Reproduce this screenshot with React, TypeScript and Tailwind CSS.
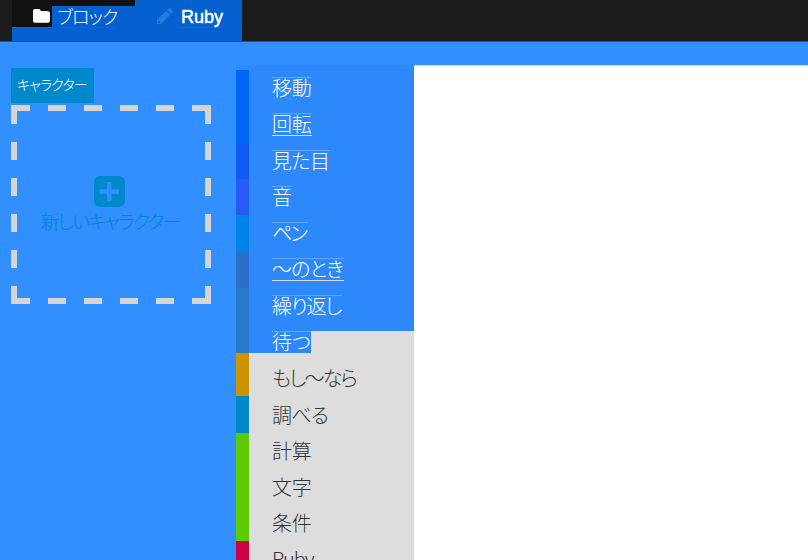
import React from 'react';

const categories = [
  { color: 'bg-[#0066f8]', height: 'h-[73px]' },
  { color: 'bg-[#105cf3]', height: 'h-[36px]' },
  { color: 'bg-[#285af6]', height: 'h-[36px]' },
  { color: 'bg-[#0083e8]', height: 'h-[36px]' },
  { color: 'bg-[#2a70ca]', height: 'h-[37px]' },
  { color: 'bg-[#2a78c8]', height: 'h-[65px]' },
  { color: 'bg-[#cc9500]', height: 'h-[43px]' },
  { color: 'bg-[#0088cc]', height: 'h-[37px]' },
  { color: 'bg-[#5ccb00]', height: 'h-[108px]' },
  { color: 'bg-[#cc0044]', height: 'h-[19px]' },
];

type Item = { label: string; top: string; width: string; spacing: string; selected?: boolean; underline?: boolean };

const items: Item[] = [
  { label: '移動', top: 'mt-[12px]', width: 'w-[40px]', spacing: 'tracking-[-0.3px]', selected: true },
  { label: '回転', top: 'mt-[14px]', width: 'w-[40px]', spacing: 'tracking-[-0.3px]', selected: true, underline: true },
  { label: '見た目', top: 'mt-[15px]', width: 'w-[58px]', spacing: 'tracking-[-0.6px]', selected: true },
  { label: '音', top: 'mt-[14px]', width: 'w-[20px]', spacing: 'tracking-normal', selected: true },
  { label: 'ペン', top: 'mt-[14px]', width: 'w-[36px]', spacing: 'tracking-[-2px]', selected: true },
  { label: '〜のとき', top: 'mt-[14px]', width: 'w-[72px]', spacing: 'tracking-[-0.9px]', selected: true, underline: true },
  { label: '繰り返し', top: 'mt-[15px]', width: 'w-[70px]', spacing: 'tracking-[-1.1px]', selected: true },
  { label: '待つ', top: 'mt-[14px]', width: 'w-[39px]', spacing: 'tracking-normal', selected: true },
  { label: 'もし〜なら', top: 'mt-[14px]', width: 'w-[86px]', spacing: 'tracking-[-1.7px]' },
  { label: '調べる', top: 'mt-[15px]', width: 'w-[57px]', spacing: 'tracking-[-0.7px]' },
  { label: '計算', top: 'mt-[14px]', width: 'w-[40px]', spacing: 'tracking-[-0.3px]' },
  { label: '文字', top: 'mt-[14px]', width: 'w-[40px]', spacing: 'tracking-[-0.3px]' },
  { label: '条件', top: 'mt-[14px]', width: 'w-[40px]', spacing: 'tracking-[-0.3px]' },
  { label: 'Ruby', top: 'mt-[14px]', width: 'w-[44px]', spacing: 'tracking-[-1.1px]' },
];

function NavBar() {
  return (
    <header className="flex h-[42px] border-b border-[#0858bd] bg-[#1c1c1c] pl-3">
      <div className="flex h-[41px] w-[123px] flex-col bg-[#0560d0]">
        <div className="flex h-[27px] bg-[#111111]">
          <div className="h-full w-10 pl-[20px] pt-[9px]">
            <svg width="18" height="14" viewBox="0 0 18 14" fill="white">
              <path d="M1 2.2C1 .8 1.8 0 3 0h3.6c1.3 0 2 .8 2 2h6.2C16.800 2 18 2.800 18 4v7.700c0 1.300-.9 2-2.100 2H3c-1.200 0-2-.8-2-2z" />
            </svg>
          </div>
          <div className="mt-[6px] h-[21px] flex-1 whitespace-nowrap bg-[#0560d0] pl-[5px] text-[18px] leading-[24px] tracking-[-0.8px] text-white">ブロック</div>
        </div>
        <div className="h-px w-[104px] bg-[#0866dd]" />
      </div>
      <div className="flex h-[41px] w-[107px] bg-[#0560d0] pl-[21px]">
        <svg className="mt-[8px]" width="17" height="17" viewBox="0 0 17 17" fill="#2478e4">
          <path d="M1 11.800 9.900 2.900l4.200 4.200L5.200 16H1zM10.800 2 12.300.6c.7-.7 1.500-.7 2.200 0l1.900 1.900c.7.700.7 1.500 0 2.200L15 6.200z" />
          <path d="m2.500 12.500 1.900 1.900-.8.700H2v-1.700z" fill="#0560d0" />
        </svg>
        <span className="ml-[8px] mt-[5px] h-[23px] border-b border-[#1169df] text-[18px] font-normal leading-[24px] text-white [-webkit-text-stroke:0.5px_white]">Ruby</span>
      </div>
    </header>
  );
}

function NewCharacter() {
  return (
    <button className="relative mt-[2px] block h-[199px] w-[200px] text-[#0088cc]">
      <svg className="absolute inset-0" width="200" height="199" fill="none" stroke="#d5d5d5" strokeWidth="6">
        <path d="M0 3H19M37 3h18M73 3h18M109 3h18M145 3h18M181 3h19M0 196H19M37 196h18M73 196h18M109 196h18M145 196h18M181 196h19" />
        <path d="M3 0V19M3 37v18M3 73v18M3 109v18M3 145v18M3 181v18M197 0V19M197 37v18M197 73v18M197 109v18M197 145v18M197 181v18" />
      </svg>
      <span className="flex flex-col items-center pt-[5px]">
        <svg className="-mt-px mr-[4px]" width="31" height="31" viewBox="0 0 31 31">
          <rect width="31" height="31" rx="6" fill="#0088cc" />
          <path d="M13 6h4.500v7.200H25v4.600h-7.500V25H13v-7.200H5.500v-4.600H13z" fill="#328fff" />
        </svg>
        <span className="mr-[2px] whitespace-nowrap text-[19px] leading-[31px] tracking-[-1.7px]">新しいキャラクター</span>
      </span>
    </button>
  );
}

export default function App() {
  return (
    <div className="flex h-[560px] w-[808px] flex-col overflow-hidden bg-[#328fff] font-['Liberation_Sans','Noto_Sans_CJK_JP',sans-serif] font-light [font-feature-settings:'palt']">
      <NavBar />
      <main className="flex h-[518px]">
        <aside className="w-[236px] pl-[11px] pt-[26px]">
          <div className="h-[35px] w-[83px] whitespace-nowrap bg-[#0088cc] pl-[6px] text-[14px] font-light leading-[34px] tracking-[-0.8px] text-white">キャラクター</div>
          <NewCharacter />
        </aside>
        <section className="mt-[23px] flex h-[495px] w-[178px] overflow-hidden bg-[linear-gradient(#2d88fa_266px,#dddddd_266px)]">
          <div className="w-[13px] shrink-0 pt-[5px]">
            {categories.map((c) => <div key={c.color} className={`${c.color} ${c.height}`} />)}
          </div>
          <div className="flex w-[165px] flex-col items-start bg-[linear-gradient(#2d88fa,#2d88fa)] bg-[length:23px_288px] bg-no-repeat pl-[23px]">
            {items.map((item) => (
              <div
                key={item.label}
                className={`${item.top} ${item.width} ${item.spacing} h-[22px] shrink-0 whitespace-nowrap border-t font-['Noto_Sans_CJK_JP',sans-serif] text-[20px] leading-[20px] ${item.selected ? 'border-[#62a5f8] bg-[#2d88fa] text-white' : 'border-transparent text-[#333333]'} ${item.underline ? 'shadow-[0_1px_0_#dddddd]' : ''}`}
              >
                {item.label}
              </div>
            ))}
          </div>
        </section>
        <section className="mt-[23px] h-[495px] flex-1 border-t border-[#d5dbe3] bg-white" />
      </main>
    </div>
  );
}
